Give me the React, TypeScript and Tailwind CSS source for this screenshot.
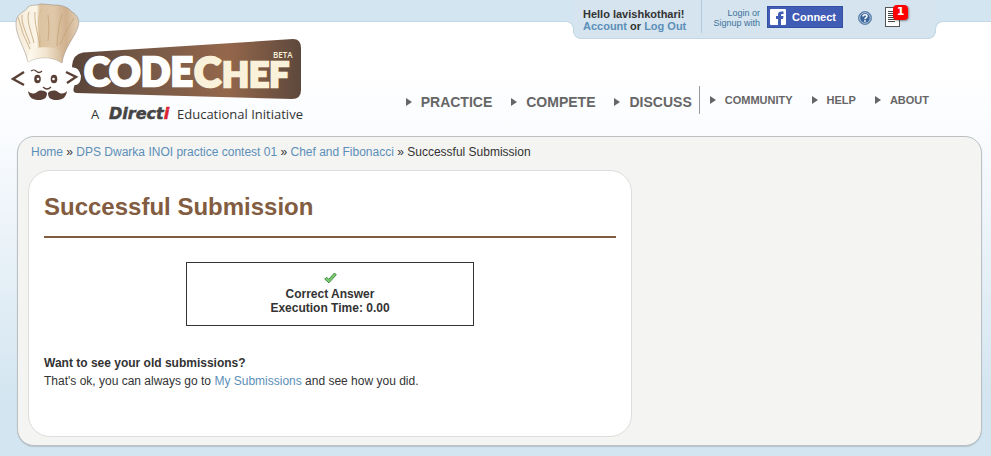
import React from "react";

const BIG_LINKS = ["PRACTICE", "COMPETE", "DISCUSS"];
const SMALL_LINKS = ["COMMUNITY", "HELP", "ABOUT"];

function Logo() {
  return (
    <svg width="310" height="130" viewBox="0 0 310 130" role="img" aria-label="CodeChef, a Directi educational initiative" className="block">
      <defs>
        <linearGradient id="plate" x1="0" x2="1">
          <stop offset="0" stopColor="#594338" />
          <stop offset="0.3" stopColor="#755846" />
          <stop offset="0.68" stopColor="#94674b" />
          <stop offset="1" stopColor="#5d483c" />
        </linearGradient>
        <linearGradient id="hat" x1="0" x2="1">
          <stop offset="0" stopColor="#f5ebda" />
          <stop offset="0.33" stopColor="#fbf5e8" />
          <stop offset="0.38" stopColor="#dcc3a0" />
          <stop offset="0.6" stopColor="#dfc8a9" />
          <stop offset="0.8" stopColor="#d0b18e" />
          <stop offset="1" stopColor="#e2cfb5" />
        </linearGradient>
        <linearGradient id="band" x1="0" x2="1">
          <stop offset="0" stopColor="#fffaf0" />
          <stop offset="0.5" stopColor="#f3e6d1" />
          <stop offset="1" stopColor="#d6bd9c" />
        </linearGradient>
      </defs>
      <path d="M83 52.500 L293 39 Q301 39 301 48 L301 90 Q301 99 292 99 L77 93 Q72 93 74 87 L76 80 L72 66 Q73 54 83 52.500Z" fill="url(#plate)" />
      <path d="M28 61 Q45 53 62 62 L68 69 Q78 64 81 76 Q81 87 71 85 L65 94 H29 L24 84Z" fill="#fff" />
      <path d="M28 62 C25 48 15 35 16 22 C17 12 25 13 28 7 C32 4 37 6 40 4 C47 4 51 5 55 5 C62 5 68 7 72 12 C78 15 80 22 78 27 C75 37 64 48 62 63 C52 56 38 56 28 62Z" fill="url(#hat)" stroke="#8f8579" strokeWidth="0.500" />
      <path d="M28 62 C27 56 29 51 33 49 C42 46 56 47 61 51 C60 54 62 59 62 63 C52 56 38 56 28 62Z" fill="url(#band)" />
      <g fill="none" stroke="#c4a376" strokeWidth="0.800">
        <path d="M18 17 Q22 34 30 49" />
        <path d="M22 15 C21 24 27 34 30 44" />
        <path d="M29 12 C26 20 31 31 34 43" />
        <path d="M35 12 C34 24 39 37 40 47" />
        <path d="M42 9 C36 16 39 32 41 43" stroke="#d5b88f" />
        <path d="M48 15 Q50 27 48 41" />
        <path d="M62 14 Q58 26 57 46" />
        <path d="M74 18 Q65 31 60 45" />
      </g>
      <g fill="none" stroke="#5a4036" strokeWidth="2.400">
        <path d="M24 72 L13 79 L24 85" />
        <path d="M66 72 L76 77 L67 83" />
      </g>
      <path d="M31 71 Q34 69 36 71 Q39 74 42 71" fill="none" stroke="#5a4036" strokeWidth="1.200" />
      <ellipse cx="37.500" cy="79" rx="3.300" ry="4.300" fill="#5a4036" />
      <ellipse cx="54" cy="79" rx="3.300" ry="4.300" fill="#5a4036" />
      <circle cx="38" cy="79" r="1.300" fill="#fff" />
      <circle cx="53.500" cy="79" r="1.300" fill="#fff" />
      <path d="M43 87 Q47 91 51 87" fill="none" stroke="#5a4036" strokeWidth="1.200" />
      <path d="M47 93 C44 90 40 90 37 92 C33 95 30 93 28 91 C29 98 33 100 39 100 C44 100 47 98 47 93Z M48 93 C51 90 55 90 58 92 C62 95 65 93 67 91 C66 98 62 100 56 100 C51 100 48 98 48 93Z" fill="#5a4036" />
      <g fontFamily="Lato, sans-serif" fontWeight="900" strokeWidth="2.500">
        <text x="84" y="86" fontSize="39" fill="#fff" stroke="#fff">CODE</text>
        <text x="194" y="87" fontSize="41" fill="#faf1da" stroke="#faf1da">
          C<tspan x="222" fontSize="35">HEF</tspan>
        </text>
      </g>
      <text x="273" y="58" fontSize="8" fontFamily="'Open Sans', sans-serif" fontWeight="600" fill="#faf1da">BETA</text>
      <g fontFamily="'Open Sans', sans-serif" fontSize="13" fill="#333">
        <text x="91" y="119">A</text>
        <text x="177" y="119">Educational Initiative</text>
      </g>
      <text x="109" y="119" fontFamily="'DejaVu Sans', sans-serif" fontSize="16" fontWeight="700" fontStyle="italic" fill="#444" stroke="#444" strokeWidth="0.500">
        Direct<tspan fill="#dd2233" stroke="#dd2233">i</tspan>
      </text>
    </svg>
  );
}

function Arrow() {
  return (
    <svg width="6" height="8" viewBox="0 0 6 8" aria-hidden="true">
      <path d="M0 0 L6 4 L0 8Z" fill="#666" />
    </svg>
  );
}

function AccountTab() {
  return (
    <div className="flex h-[39px] w-[363px] shrink-0 items-start rounded-b-lg border-x border-b border-[#c3d7e4] bg-[#d5e4ee] pl-[9px]">
      <div className="w-[118px] pt-2 text-[11px] leading-3 font-bold text-[#333]">
        <p>Hello lavishkothari!</p>
        <p>
          <a href="#account" className="text-[#5c8fb8]">Account</a> or <a href="#logout" className="text-[#5c8fb8]">Log Out</a>
        </p>
      </div>
      <div className="h-[33px] w-px bg-[#b2cbdc]" />
      <p className="w-[58px] pt-2 text-right text-[9px] leading-[10px] text-[#3d739b]">
        Login or
        <br />
        Signup with
      </p>
      <button type="button" className="mt-[6px] ml-[7px] flex h-[22px] w-[76px] items-center gap-[6px] border border-[#3450a3] bg-[#415cb4] pl-[2px] text-[11px] font-bold text-white">
        <svg width="16" height="16" viewBox="0 0 16 16" aria-hidden="true">
          <rect width="16" height="16" rx="1" fill="#fff" />
          <path d="M8 16 V10 H6 V7 H8 V5.500 Q8 2.500 11.500 2.500 H13.500 V5 H12 Q11 5 11 6 V7 H13.500 L13 10 H11 V16Z" fill="#415cb4" />
        </svg>
        Connect
      </button>
      <button type="button" aria-label="Help" className="mt-[11px] ml-[15px]">
        <svg width="14" height="14" viewBox="0 0 14 14" aria-hidden="true" className="block">
          <circle cx="7" cy="7" r="6.500" fill="#3b659b" stroke="#6688b0" />
          <circle cx="7" cy="7" r="5.300" fill="none" stroke="#d7e4f1" strokeWidth="0.800" />
          <path d="M5 5.500 Q5 3.700 7 3.700 Q9 3.700 9 5.300 Q9 6.300 7.800 6.800 Q7 7.200 7 8.200" fill="none" stroke="#fff" strokeWidth="1.500" />
          <rect x="6.200" y="9.200" width="1.600" height="1.600" fill="#fff" />
        </svg>
      </button>
      <button type="button" aria-label="Notifications" className="relative mt-[7px] ml-[13px]">
        <svg width="15" height="20" viewBox="0 0 15 20" aria-hidden="true" className="block">
          <rect x="0.500" y="0.500" width="14" height="19" fill="#fff" stroke="#555" />
          <path d="M3 4.500 H12 M3 6.500 H12 M3 8.500 H12 M3 10.500 H12 M3 12.500 H12 M3 14.500 H10" stroke="#444" />
        </svg>
        <span className="absolute -top-[2px] left-2 flex h-[15px] w-[15px] items-center justify-center rounded-[4px] bg-[#f00] font-['DejaVu_Sans',sans-serif] text-[11px] font-bold text-white shadow-[1px_1px_2px_#0006]">
          1
        </span>
      </button>
    </div>
  );
}

export default function App() {
  return (
    <div className="min-h-screen bg-[linear-gradient(to_bottom,#fff_70px,#f9fbfe_140px,#d3e5f0_400px)] pb-[10px] font-['Liberation_Sans',Arial,sans-serif] text-xs text-[#333]">
      <div className="flex items-start">
        <div className="relative -mr-px flex-1 bg-[#d3e5f0] pt-[21px]">
          <div className="h-3 rounded-tr-lg border-t border-r border-[#c3d7e4] bg-white" />
        </div>
        <AccountTab />
        <div className="relative -ml-px w-14 bg-[#d3e5f0] pt-[21px]">
          <div className="h-3 rounded-tl-lg border-t border-l border-[#c3d7e4] bg-white" />
        </div>
      </div>

      <header className="flex items-start justify-between pr-[62px]">
        <a href="#home" className="relative -mt-[39px]">
          <Logo />
        </a>
        <nav aria-label="Main" className="flex pt-[47px] font-bold text-[#666]">
          <ul className="flex h-7 items-center gap-[19px] border-r border-[#999] pt-1 pr-[7px] text-sm">
            {BIG_LINKS.map((label) => (
              <li key={label}>
                <a href={"#" + label.toLowerCase()} className="flex items-center gap-[9px]">
                  <Arrow />
                  {label}
                </a>
              </li>
            ))}
          </ul>
          <ul className="flex h-7 items-center gap-[19px] pl-[10px] text-[11px]">
            {SMALL_LINKS.map((label) => (
              <li key={label}>
                <a href={"#" + label.toLowerCase()} className="flex items-center gap-[9px]">
                  <Arrow />
                  {label}
                </a>
              </li>
            ))}
          </ul>
        </nav>
      </header>

      <main className="mt-[6px] mr-[9px] ml-[17px] rounded-[17px] border border-[#bcc0c3] bg-[#f4f4f2] px-[10px] pt-[7px] pb-2 shadow-[0_1px_1px_#b4c3cc]">
        <nav aria-label="Breadcrumb" className="pl-[3px] leading-4">
          <a href="#home" className="text-[#5c8fb8]">Home</a> » <a href="#contest" className="text-[#5c8fb8]">DPS Dwarka INOI practice contest 01</a> »{" "}
          <a href="#problem" className="text-[#5c8fb8]">Chef and Fibonacci</a> » Successful Submission
        </nav>
        <section className="mt-[10px] w-[604px] max-w-full rounded-[22px] border border-[#ddd] bg-white px-[15px] pt-5 pb-[46px]">
          <h1 className="border-b-2 border-[#825c40] pb-[13px] text-2xl leading-8 font-bold text-[#825c40]">Successful Submission</h1>
          <div className="mx-auto mt-6 flex h-16 w-72 max-w-full flex-col items-center border border-[#333] pt-[9px] leading-[14px] font-bold">
            <svg width="13" height="12" viewBox="0 0 13 12" aria-hidden="true" className="mb-[3px] block">
              <path d="M0.700 7 L2.700 5.300 L4.700 7.300 L10.500 1 L12.300 2.800 L4.900 10.800Z" fill="#7bcb70" stroke="#3e8a40" strokeWidth="1" strokeLinejoin="round" />
            </svg>
            <p>Correct Answer</p>
            <p>Execution Time: 0.00</p>
          </div>
          <div className="mt-7 leading-[18px]">
            <h2 className="font-bold">Want to see your old submissions?</h2>
            <p>
              That's ok, you can always go to <a href="#submissions" className="text-[#5c8fb8]">My Submissions</a> and see how you did.
            </p>
          </div>
        </section>
      </main>
    </div>
  );
}
